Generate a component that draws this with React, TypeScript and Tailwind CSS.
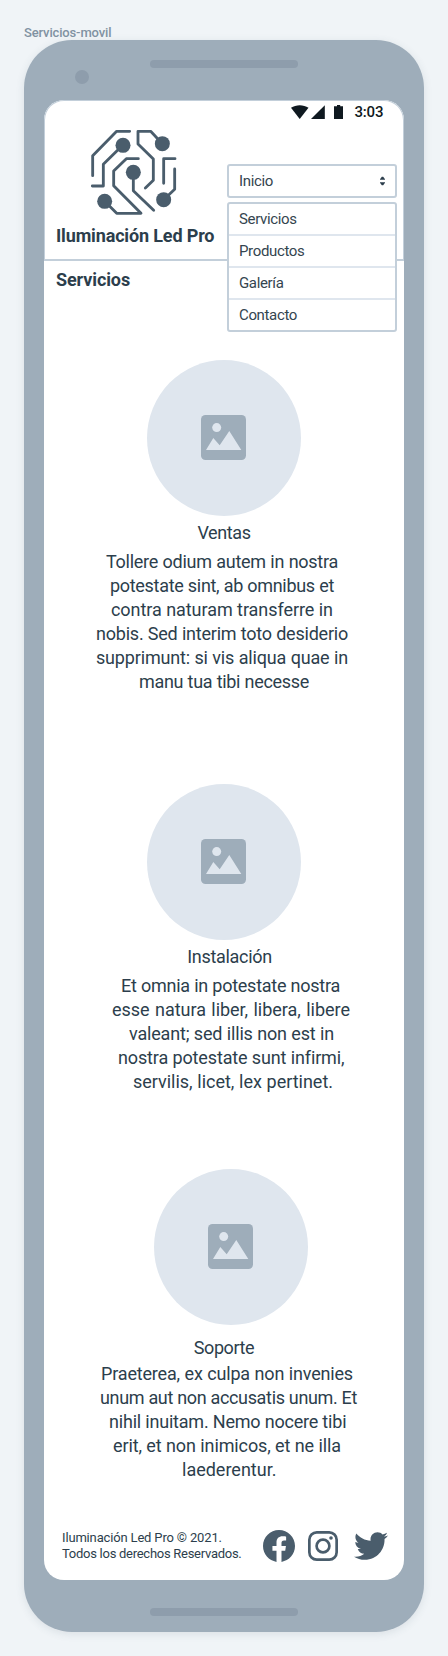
import React from "react";

type Line = { text: string; className: string };

function Lines({ lines }: { lines: Line[] }) {
  return (
    <p className="text-[18px] leading-6">
      {lines.map((line) => (
        <span
          key={line.text}
          className={`block whitespace-nowrap [text-align-last:justify] ${line.className}`}
        >
          {line.text}
        </span>
      ))}
    </p>
  );
}

function Picture() {
  return (
    <div className="flex h-[156px] w-[154px] items-center justify-center rounded-[50%] bg-[#dfe6ee]">
      <svg width="45" height="45" viewBox="0 0 45 45" className="mr-px mb-px">
        <rect width="45" height="45" rx="4.5" fill="#9eadba" />
        <circle cx="15.7" cy="12.6" r="4.5" fill="#dfe6ee" />
        <path d="M5 35L12.3 23L18.7 30.3L28.3 16L40.3 35Z" fill="#dfe6ee" />
      </svg>
    </div>
  );
}

function Logo() {
  return (
    <svg width="110" height="105" viewBox="0 0 330 315" className="ml-[35px]">
      <g fill="none" stroke="#4a5d6c" strokeWidth="8.5" strokeLinecap="round" strokeLinejoin="round">
        <path d="M149 34H110L38 107V167" />
        <path d="M37 198H70V133L128 76" />
        <path d="M247 71L212 34H174V72L220 117V181L196 204" />
        <path d="M285 116H251V190" />
        <path d="M284 147V208L251 239" />
        <path d="M175 116H139L101 153V197L183 280H110L74 244" />
        <path d="M160 157V212L221 271" />
      </g>
      <g fill="#4a5d6c">
        <circle cx="129" cy="76" r="22.5" />
        <circle cx="247" cy="71" r="22.5" />
        <circle cx="160" cy="157" r="22.5" />
        <circle cx="74" cy="244" r="22.5" />
        <circle cx="251" cy="239" r="22.5" />
      </g>
    </svg>
  );
}

function StatusBar() {
  return (
    <div className="flex h-5 items-center pl-[246px] text-[#0f1920]">
      <svg width="54" height="14" viewBox="0 0 54 14" fill="currentColor" className="mt-0.5">
        <path d="M0 2.8C5-.7 12.5-.7 17.5 2.8L8.7 14Z" />
        <path d="M20 14L33.8 .3V14Z" />
        <path d="M43 1.2H46V0H49.2V1.2H52V14H43Z" />
      </svg>
      <span className="mt-0.5 ml-[9.5px] w-[28px] whitespace-nowrap text-[15px] leading-5 font-medium tracking-[-0.2px]">
        3:03
      </span>
    </div>
  );
}

function Menu() {
  const items = ["Servicios", "Productos", "Galería", "Contacto"];
  return (
    <nav className="absolute top-[64px] left-[183px] w-[170px] text-[15px] tracking-[-0.35px] text-[#34454f]">
      <div className="flex h-[34px] items-center justify-between rounded-[3px] border-2 border-[#c3cfda] bg-white pr-2.5 pl-2.5">
        <span>Inicio</span>
        <svg width="5" height="10" viewBox="0 0 5 10" fill="#2c3e4c">
          <path d="M0 3.2L1.8.8H3.2L5 3.2V3.8H0Z" />
          <path d="M0 6.8L1.8 9.2H3.2L5 6.8V6.2H0Z" />
        </svg>
      </div>
      <ul className="mt-1 divide-y-2 divide-[#dfe6ee] rounded-[3px] border-2 border-[#c3cfda] bg-white">
        {items.map((item) => (
          <li key={item} className="box-content h-[30px] pl-2.5 leading-[30px]">
            {item}
          </li>
        ))}
      </ul>
    </nav>
  );
}

const ventas: Line[] = [
  { text: "Tollere odium autem in nostra", className: "ml-[62px] w-[232px] tracking-[-0.27px]" },
  { text: "potestate sint, ab omnibus et", className: "ml-[66px] w-[224px] tracking-[-0.3px]" },
  { text: "contra naturam transferre in", className: "ml-[67px] w-[222px] tracking-[-0.06px]" },
  { text: "nobis. Sed interim toto desiderio", className: "ml-[52px] w-[252px] tracking-[-0.22px]" },
  { text: "supprimunt: si vis aliqua quae in", className: "ml-[52px] w-[252px] tracking-[-0.17px]" },
  { text: "manu tua tibi necesse", className: "ml-[95px] w-[170px] tracking-[-0.3px]" },
];

const instalacion: Line[] = [
  { text: "Et omnia in potestate nostra", className: "ml-[77px] w-[219px] tracking-[-0.25px]" },
  { text: "esse natura liber, libera, libere", className: "ml-[68px] w-[238px] tracking-[-0.02px]" },
  { text: "valeant; sed illis non est in", className: "ml-[85px] w-[205px] tracking-[-0.17px]" },
  { text: "nostra potestate sunt infirmi,", className: "ml-[74px] w-[226px] tracking-[-0.13px]" },
  { text: "servilis, licet, lex pertinet.", className: "ml-[89px] w-[200px] tracking-[-0.02px]" },
];

const soporte: Line[] = [
  { text: "Praeterea, ex culpa non invenies", className: "ml-[57px] w-[252px] tracking-[-0.17px]" },
  { text: "unum aut non accusatis unum. Et", className: "ml-[56px] w-[257px] tracking-[-0.33px]" },
  { text: "nihil inuitam. Nemo nocere tibi", className: "ml-[65px] w-[237px] tracking-[-0.2px]" },
  { text: "erit, et non inimicos, et ne illa", className: "ml-[69px] w-[228px] tracking-[-0.11px]" },
  { text: "laederentur.", className: "ml-[138px] w-[96px]" },
];

function Footer() {
  return (
    <footer className="mt-[48px] flex items-start pl-[18px]">
      <p className="w-[201px] text-[13px] leading-4 whitespace-nowrap">
        <span className="block tracking-[-0.16px]">Iluminación Led Pro © 2021.</span>
        <span className="block tracking-[-0.27px]">Todos los derechos Reservados.</span>
      </p>
      <div className="flex h-8 items-center text-[#4a5d6c]">
        <svg width="32" height="32" viewBox="0 0 24 24" fill="currentColor">
          <path d="M24 12.073c0-6.627-5.373-12-12-12s-12 5.373-12 12c0 5.99 4.388 10.954 10.125 11.854v-8.385H7.078v-3.47h3.047V9.43c0-3.007 1.792-4.669 4.533-4.669 1.312 0 2.686.235 2.686.235v2.953H15.83c-1.491 0-1.956.925-1.956 1.874v2.25h3.328l-.532 3.47h-2.796v8.385C19.612 23.027 24 18.062 24 12.073z" />
        </svg>
        <svg width="30" height="30" viewBox="0 0 30 30" fill="none" stroke="currentColor" strokeWidth="2.7" className="ml-[13px]">
          <rect x="1.35" y="1.35" width="27.3" height="27.3" rx="7.4" />
          <circle cx="15" cy="15" r="6.4" />
          <circle cx="23" cy="7" r="1.8" fill="currentColor" stroke="none" />
        </svg>
        <svg width="34" height="34" viewBox="0 0 24 24" fill="currentColor" className="ml-4">
          <path d="M23.954 4.569c-.885.389-1.83.654-2.825.775 1.014-.611 1.794-1.574 2.163-2.723-.951.555-2.005.959-3.127 1.184-.896-.959-2.173-1.559-3.591-1.559-2.717 0-4.92 2.203-4.92 4.917 0 .39.045.765.127 1.124C7.691 8.094 4.066 6.13 1.64 3.161c-.427.722-.666 1.561-.666 2.475 0 1.71.87 3.213 2.188 4.096-.807-.026-1.566-.248-2.228-.616v.061c0 2.385 1.693 4.374 3.946 4.827-.413.111-.849.171-1.296.171-.314 0-.615-.03-.916-.086.631 1.953 2.445 3.377 4.604 3.417-1.68 1.319-3.809 2.105-6.102 2.105-.39 0-.779-.023-1.17-.067 2.189 1.394 4.768 2.209 7.557 2.209 9.054 0 13.999-7.496 13.999-13.986 0-.209 0-.42-.015-.63.961-.689 1.8-1.56 2.46-2.548l-.047-.02z" />
        </svg>
      </div>
    </footer>
  );
}

export default function App() {
  return (
    <div className="h-[1656px] w-[448px] overflow-hidden bg-[#f0f4f7] px-6 pt-[25px] font-[Roboto,'Liberation_Sans',sans-serif] text-[#2c3e4c]">
      <div className="h-[15px] text-[13px] leading-4 font-medium tracking-[-0.15px] text-[#8092a2]">Servicios-movil</div>
      <div className="h-[1592px] rounded-[48px] bg-[#9eadba] px-5 shadow-[0_2px_8px_rgba(60,80,100,0.12)]">
        <div className="flex h-[60px] items-start">
          <div className="mt-[30px] ml-[31px] size-[14px] rounded-full bg-[#8e9dac]" />
          <div className="mt-5 ml-[61px] h-2 w-[148px] rounded-full bg-[#8e9dac]" />
        </div>
        <main className="relative h-[1480px] w-[360px] rounded-[20px] bg-white">
          <header className="h-[161px] rounded-t-[20px] border border-b-2 border-[#c3cfda]">
            <StatusBar />
            <div className="-mt-px h-[105px]">
              <Logo />
            </div>
            <h1 className="mt-[-1px] ml-[11px] w-[158px] text-[18px] leading-6 font-bold tracking-[-0.15px] whitespace-nowrap [text-align-last:justify]">
              Iluminación Led Pro
            </h1>
          </header>
          <Menu />
          <h2 className="mt-[7px] ml-3 text-[18px] leading-6 font-bold tracking-[-0.1px]">Servicios</h2>

          <section className="mt-[68px]">
            <div className="ml-[103px]">
              <Picture />
            </div>
            <h3 className="mt-[5px] mb-[5px] text-center text-[18px] leading-6 tracking-[-0.4px]">Ventas</h3>
            <Lines lines={ventas} />
          </section>

          <section className="mt-[90px]">
            <div className="ml-[103px]">
              <Picture />
            </div>
            <h3 className="mt-[5px] mb-[5px] pl-[11px] text-center text-[18px] leading-6 tracking-[-0.3px]">Instalación</h3>
            <Lines lines={instalacion} />
          </section>

          <section className="mt-[75px]">
            <div className="ml-[110px]">
              <Picture />
            </div>
            <h3 className="mt-[11px] mb-[2px] text-center text-[18px] leading-6 tracking-[-0.4px]">Soporte</h3>
            <Lines lines={soporte} />
          </section>

          <Footer />
        </main>
        <div className="mx-auto mt-7 h-2 w-[148px] rounded-full bg-[#8e9dac]" />
      </div>
    </div>
  );
}
